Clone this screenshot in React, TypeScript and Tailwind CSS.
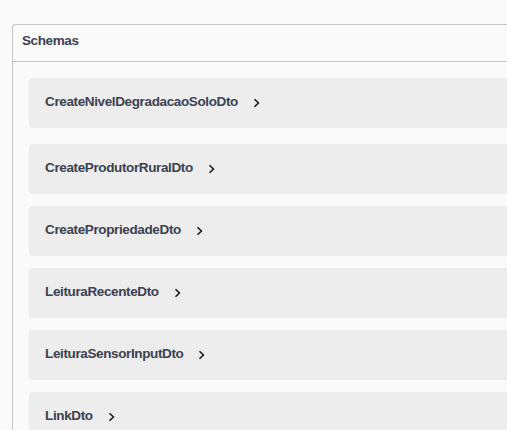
import React from "react";

const items = [
  "CreateNivelDegradacaoSoloDto",
  "CreateProdutorRuralDto",
  "CreatePropriedadeDto",
  "LeituraRecenteDto",
  "LeituraSensorInputDto",
  "LinkDto",
];

function Chevron() {
  return (
    <svg width="10" height="10" viewBox="0 0 20 20" className="ml-[14px] shrink-0">
      <path d="M6 3.5 L13 10 L6 16.5" fill="none" stroke="#1b1b1b" strokeWidth="3.4" strokeLinecap="round" strokeLinejoin="round" />
    </svg>
  );
}

export default function App() {
  return (
    <div className="min-h-[430px] w-[507px] overflow-hidden bg-[#fafafa] pl-[12px] pt-[24px]" style={{ fontFamily: '"Liberation Sans", Arial, sans-serif' }}>
      <div className="w-[520px] rounded-tl-[4px] border-l border-t border-[#c4c4c4]">
        <div className="flex h-[37px] items-center border-b border-[#c4c4c4] pb-[3px] pl-[9px] text-[13.5px] font-bold tracking-[-0.4px] text-[#3b4151]">
          Schemas
        </div>
        <div className="flex flex-col gap-[12px] pl-[16px] pt-[16px]">
          {items.map((name, i) => (
            <div
              key={name}
              className={`flex h-[50px] items-center rounded-[4px] bg-[#ededed] pb-[1px] pl-[16px] text-[13.5px] font-bold tracking-[-0.37px] text-[#3b4151] ${i === 0 ? "mb-[4px]" : ""}`}
            >
              <span>{name}</span>
              <Chevron />
            </div>
          ))}
        </div>
      </div>
    </div>
  );
}
